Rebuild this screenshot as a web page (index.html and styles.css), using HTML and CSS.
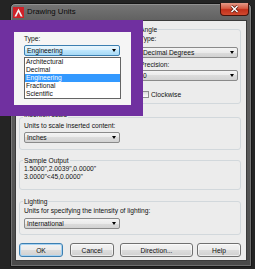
FILE: index.html
```html
<!DOCTYPE html>
<html lang="en">
<head>
    <meta charset="UTF-8">
    <meta name="viewport" content="width=device-width, initial-scale=1.0">
    <title>Drawing Units</title>
    <link rel="stylesheet" href="styles.css">
</head>
<body>
    <div class="window">
        <div class="titlebar">
            <svg class="app-icon" width="11" height="11" viewBox="0 0 11 11">
                <rect width="11" height="11" fill="#cf2027"/>
                <path d="M5.5 1.5 L9.6 9.6 H7.7 L5.5 5 L3.3 9.6 H1.4 Z" fill="#f2f2f2"/>
            </svg>
            <span class="title">Drawing Units</span>
            <div class="close-btn">
                <svg width="9" height="8" viewBox="0 0 9 8">
                    <path d="M1.5 1 L7.5 7 M7.5 1 L1.5 7" stroke="#5a1a10" stroke-width="3"/>
                    <path d="M1.5 1 L7.5 7 M7.5 1 L1.5 7" stroke="#fff" stroke-width="1.5"/>
                </svg>
            </div>
        </div>

        <div class="client">
            <div class="top-row">
                <!-- length group sits under the callout -->
                <div class="group"></div>
                <div class="group">
                    <div class="group-title">Angle</div>
                    <div class="label">Type:</div>
                    <div class="combo"><span>Decimal Degrees</span><span class="arrow"></span></div>
                    <div class="label label-gap">Precision:</div>
                    <div class="combo combo-tight"><span>0</span><span class="arrow"></span></div>
                    <div class="check"><span class="box"></span>Clockwise</div>
                </div>
            </div>

            <div class="group insertion">
                <div class="group-title title-hidden">Insertion scale</div>
                <div class="label label-up">Units to scale inserted content:</div>
                <div class="combo combo-short combo-close"><span>Inches</span><span class="arrow"></span></div>
            </div>

            <div class="group sample">
                <div class="group-title">Sample Output</div>
                <div class="line">1.5000",2.0039",0.0000"</div>
                <div class="line">3.0000"&lt;45,0.0000"</div>
            </div>

            <div class="group lighting">
                <div class="group-title">Lighting</div>
                <div class="label">Units for specifying the intensity of lighting:</div>
                <div class="combo combo-short combo-close"><span>International</span><span class="arrow"></span></div>
            </div>

            <div class="buttons">
                <div class="btn btn-ok">OK</div>
                <div class="btn btn-cancel">Cancel</div>
                <div class="btn btn-direction">Direction...</div>
                <div class="btn btn-help">Help</div>
            </div>
        </div>
    </div>

    <!-- highlighted close-up of the length type list -->
    <div class="callout">
        <div class="label">Type:</div>
        <div class="combo combo-short combo-open"><span>Engineering</span><span class="arrow"></span></div>
        <ul class="dropdown-list">
            <li>Architectural</li>
            <li>Decimal</li>
            <li class="selected">Engineering</li>
            <li>Fractional</li>
            <li>Scientific</li>
        </ul>
    </div>
</body>
</html>
```

FILE: styles.css
```css
* {
    box-sizing: border-box;
}

body {
    margin: 0;
    width: 255px;
    height: 269px;
    overflow: hidden;
    position: relative;
    padding: 3px 3px 2px 10px;
    background: #242424;
    font-family: "Liberation Sans", Arial, sans-serif;
    font-size: 6.7px;
    color: #111;
}

.window {
    width: 242px;
    height: 264px;
    padding: 0 4px 5px;
    background: linear-gradient(#767676, #606060 17px, #585858 60%, #4a4a4a);
    border: 1px solid #161616;
    border-radius: 5px 5px 1px 1px;
    box-shadow: inset 0 0 0 1px rgba(255, 255, 255, 0.2);
}

.titlebar {
    display: flex;
    align-items: flex-start;
    height: 16px;
    margin: 0 -2px;
}

.app-icon {
    margin-top: 3px;
    flex-shrink: 0;
}

.title {
    margin-left: 3px;
    line-height: 15px;
    font-size: 7.8px;
    color: #0a0a0a;
}

.close-btn {
    margin-left: auto;
    margin-top: -1px;
    width: 29px;
    height: 13px;
    display: flex;
    align-items: center;
    justify-content: center;
    background: linear-gradient(#e49a88, #d65a42 45%, #c2301b 55%, #d04a30);
    border: 1px solid #47120a;
    border-top: none;
    border-radius: 0 0 4px 4px;
}

.client {
    height: 241px;
    padding: 8px 5px 0 3px;
    background: #ececec;
    border: 1px solid #3a3a3a;
}

.top-row {
    display: grid;
    grid-template-columns: 111px 1fr;
    column-gap: 5px;
    height: 75px;
}

.group {
    border: 1px solid #d2d8dc;
    border-radius: 3px;
    padding: 0 2px 0 4px;
}

.group-title {
    width: max-content;
    margin: -5px 0 0 -1px;
    padding: 0 1px;
    line-height: 9px;
    background: #ececec;
}

.title-hidden {
    margin-top: -8px;
    margin-bottom: 3px;
}

.label {
    line-height: 9px;
    white-space: nowrap;
}

.label-gap {
    margin-top: 2px;
}

.label-up {
    margin-top: -1px;
}

.combo {
    display: flex;
    align-items: center;
    height: 11px;
    margin-top: 4px;
    padding: 0 3px 0 2px;
    line-height: 9px;
    border: 1px solid #8a8a8a;
    border-radius: 2px;
    background: linear-gradient(#f4f4f4, #eaeaea 50%, #dcdcdc 50%, #d2d2d2);
}

.combo-tight {
    margin-top: 1px;
}

.combo-close {
    margin-top: 2px;
}

.combo-short {
    width: 96px;
}

.combo .arrow {
    margin-left: auto;
    width: 0;
    height: 0;
    border-left: 2.5px solid transparent;
    border-right: 2.5px solid transparent;
    border-top: 3px solid #000;
}

.check {
    display: flex;
    align-items: center;
    height: 7px;
    margin: 10px 0 0 2px;
}

.check .box {
    width: 7px;
    height: 7px;
    margin-right: 2px;
    border: 1px solid #8e8f8f;
    background: linear-gradient(#dcdcdc, #fdfdfd);
}

.insertion {
    height: 33px;
    margin-top: 13px;
}

.sample {
    height: 30px;
    margin-top: 10px;
}

.line {
    line-height: 8px;
}

.lighting {
    height: 34px;
    margin-top: 11px;
}

.lighting .combo {
    margin-top: 3px;
}

.buttons {
    display: flex;
    height: 14px;
    margin-top: 8px;
}

.btn {
    display: flex;
    align-items: center;
    justify-content: center;
    width: 44px;
    height: 14px;
    border: 1px solid #707070;
    border-radius: 3px;
    background: linear-gradient(#f3f3f3, #ebebeb 50%, #dddddd 50%, #d0d0d0);
    box-shadow: inset 0 0 0 1px rgba(255, 255, 255, 0.6);
}

.btn-ok {
    border-color: #3c7fb1;
    box-shadow: inset 0 0 0 1px #a6d2f2;
}

.btn-cancel {
    margin-left: 7px;
}

.btn-direction {
    width: 73px;
    margin-left: 6px;
}

.btn-help {
    margin-left: 4px;
}

.callout {
    position: absolute;
    left: 0;
    top: 20px;
    width: 143px;
    height: 96px;
    padding: 3px 0 0 10px;
    background: #f5f5f5;
    border-style: solid;
    border-color: #7030a0;
    border-width: 12px 12px 11px 14px;
}

.callout .label {
    line-height: 8px;
}

.combo-open {
    margin-top: 2px;
    border-color: #3c7fb1;
    background: linear-gradient(#eaf6fd, #d9f0fc 50%, #bee6fd 50%, #a7d9f5);
}

.dropdown-list {
    width: 97px;
    margin: 1px 0 0;
    padding: 0;
    list-style: none;
    background: #fff;
    border: 1px solid #646464;
}

.dropdown-list li {
    line-height: 8px;
    padding-left: 1px;
}

.dropdown-list .selected {
    background: #3399ff;
    color: #fff;
}
```
